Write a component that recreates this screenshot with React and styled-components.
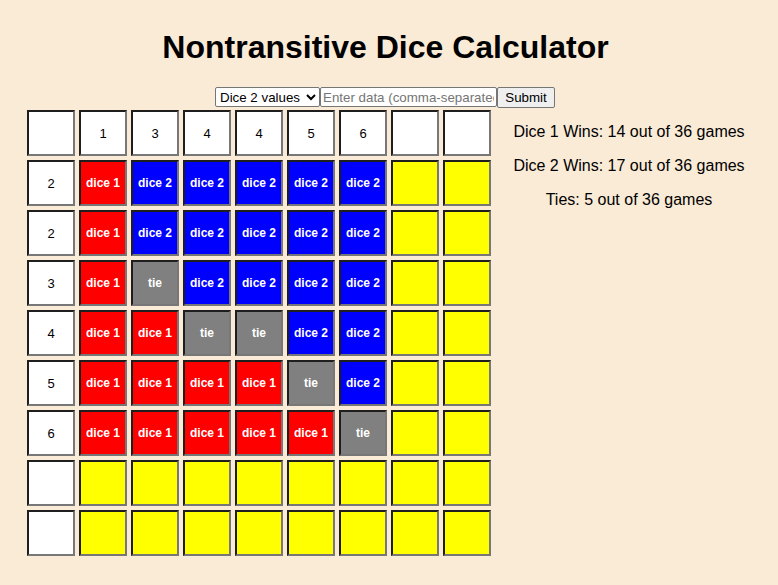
import React from 'react'
import styled, { createGlobalStyle } from 'styled-components'

const GlobalStyle = createGlobalStyle`
  body {
    margin: 8px;
    background: #faebd7;
    font-family: "Liberation Sans", Arial, sans-serif;
    color: #000;
  }
`

const Title = styled.h1`
  font-size: 32px;
  font-weight: bold;
  text-align: center;
  margin: 21px 7px 0 0;
  line-height: 37px;
`

const Controls = styled.form`
  display: flex;
  justify-content: center;
  align-items: center;
  margin: 21px 8px 3px 0;
  height: 20px;

  select,
  input,
  button {
    font-family: "Liberation Sans", Arial, sans-serif;
    font-size: 13.33px;
    box-sizing: border-box;
    height: 20px;
    color: #000;
  }
  select {
    width: 105px;
    background: #fff;
    border: 1px solid #767676;
    border-radius: 2px;
    padding: 0;
  }
  input {
    width: 177px;
    border: 1px solid #767676;
    border-radius: 2px;
    padding: 1px 2px;
  }
  input::placeholder {
    color: #757575;
  }
  button {
    width: 58px;
    height: 21px;
    background: #efefef;
    border: 1px solid #767676;
    border-radius: 2px;
    padding: 0;
  }
`

const Layout = styled.div`
  display: flex;
  justify-content: center;
  align-items: flex-start;
  gap: 16px;
`

const Grid = styled.div`
  display: grid;
  grid-template-columns: repeat(9, 48px);
  grid-auto-rows: 46px;
  gap: 4px;
`

const cellColors = {
  plain: { bg: '#fff', fg: '#000' },
  empty: { bg: '#ffff00', fg: '#000' },
  one: { bg: '#ff0000', fg: '#fff' },
  two: { bg: '#0000ff', fg: '#fff' },
  tie: { bg: '#808080', fg: '#fff' },
}

const Cell = styled.div`
  box-sizing: border-box;
  display: flex;
  align-items: center;
  justify-content: center;
  font-size: ${p => (p.$result ? '12px' : '13px')};
  font-weight: ${p => (p.$result ? 'bold' : 'normal')};
  border-style: solid;
  border-width: 2px;
  border-color: #1e1e1e #777 #777 #1e1e1e;
  background: ${p => cellColors[p.$kind].bg};
  color: ${p => cellColors[p.$kind].fg};
`

const Results = styled.div`
  width: 244px;
  text-align: center;
  font-size: 16px;

  p {
    margin: 13px 0 16px;
    line-height: 18px;
  }
`

const dice1 = [2, 2, 3, 4, 5, 6]
const dice2 = [1, 3, 4, 4, 5, 6]

const buildCells = () => {
  const cells = []
  for (let r = 0; r < 9; r++) {
    for (let c = 0; c < 9; c++) {
      if (r === 0) {
        cells.push({ kind: 'plain', text: c >= 1 && c <= 6 ? dice2[c - 1] : '' })
      } else if (c === 0) {
        cells.push({ kind: 'plain', text: r <= 6 ? dice1[r - 1] : '' })
      } else if (r <= 6 && c <= 6) {
        const a = dice1[r - 1]
        const b = dice2[c - 1]
        if (a > b) cells.push({ kind: 'one', text: 'dice 1' })
        else if (a < b) cells.push({ kind: 'two', text: 'dice 2' })
        else cells.push({ kind: 'tie', text: 'tie' })
      } else {
        cells.push({ kind: 'empty', text: '' })
      }
    }
  }
  return cells
}

const App = () => {
  const cells = buildCells()
  return (
    <>
      <GlobalStyle />
      <Title>Nontransitive Dice Calculator</Title>
      <Controls onSubmit={e => e.preventDefault()}>
        <select defaultValue="2">
          <option value="1">Dice 1 values</option>
          <option value="2">Dice 2 values</option>
        </select>
        <input type="text" placeholder="Enter data (comma-separated values)" />
        <button type="submit">Submit</button>
      </Controls>
      <Layout>
        <Grid>
          {cells.map((cell, i) => (
            <Cell key={i} $kind={cell.kind} $result={cell.kind !== 'plain' && cell.kind !== 'empty'}>
              {cell.text}
            </Cell>
          ))}
        </Grid>
        <Results>
          <p>Dice 1 Wins: 14 out of 36 games</p>
          <p>Dice 2 Wins: 17 out of 36 games</p>
          <p>Ties: 5 out of 36 games</p>
        </Results>
      </Layout>
    </>
  )
}

export default App
